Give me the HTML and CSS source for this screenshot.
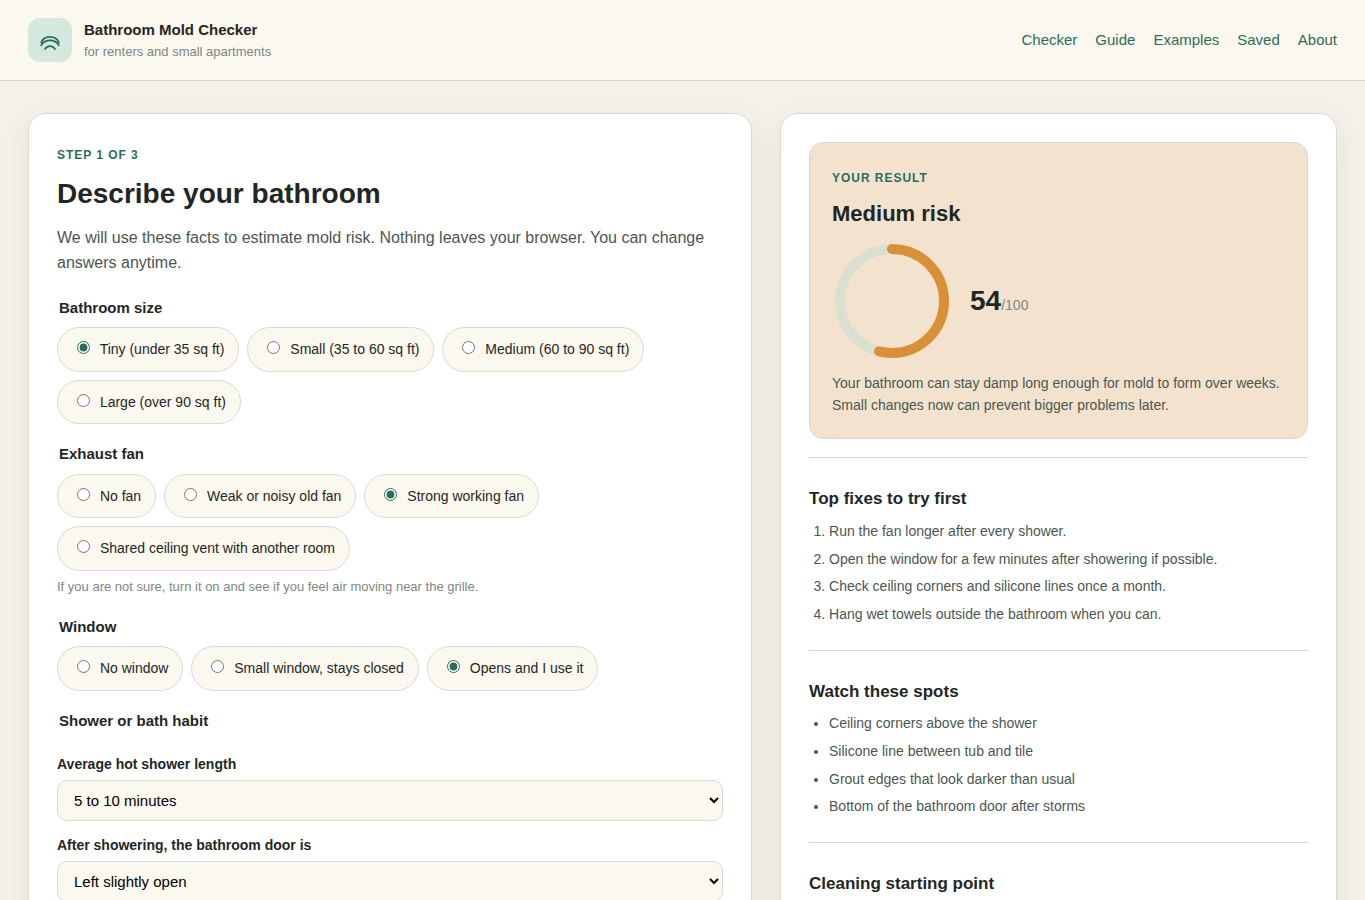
FILE: index.html
```
<!DOCTYPE html>
<html lang="en">
<head>
  <meta charset="utf-8">
  <meta name="viewport" content="width=device-width, initial-scale=1">
  <title>Bathroom Mold Checker</title>
  <link rel="stylesheet" href="styles.css">
</head>
<body>
  <header class="site-header">
    <a class="brand" href="#">
      <span class="brand-mark">
        <svg width="24" height="24" viewBox="0 0 24 24" fill="none" stroke="currentColor" stroke-width="1.7" stroke-linecap="round" aria-hidden="true">
          <path d="M3.2 14.8C6 7 18 7 20.8 14.8"/>
          <path d="M3.2 17.4C7 10.8 17 10.8 20.8 17.4"/>
          <path d="M7 21.2C9 17 15 17 17 21.2"/>
        </svg>
      </span>
      <span class="brand-text">
        <strong>Bathroom Mold Checker</strong>
        <small>for renters and small apartments</small>
      </span>
    </a>
    <nav class="site-nav">
      <a href="#">Checker</a>
      <a href="#">Guide</a>
      <a href="#">Examples</a>
      <a href="#">Saved</a>
      <a href="#">About</a>
    </nav>
  </header>

  <main class="layout">
    <form class="card">
      <p class="eyebrow">Step 1 of 3</p>
      <h1>Describe your bathroom</h1>
      <p class="lead">We will use these facts to estimate mold risk. Nothing leaves your browser. You can change answers anytime.</p>

      <fieldset>
        <legend>Bathroom size</legend>
        <div class="chips">
          <label class="chip"><input type="radio" name="size" checked> Tiny (under 35 sq ft)</label>
          <label class="chip"><input type="radio" name="size"> Small (35 to 60 sq ft)</label>
          <label class="chip"><input type="radio" name="size"> Medium (60 to 90 sq ft)</label>
          <label class="chip"><input type="radio" name="size"> Large (over 90 sq ft)</label>
        </div>
      </fieldset>

      <fieldset>
        <legend>Exhaust fan</legend>
        <div class="chips">
          <label class="chip"><input type="radio" name="fan"> No fan</label>
          <label class="chip"><input type="radio" name="fan"> Weak or noisy old fan</label>
          <label class="chip"><input type="radio" name="fan" checked> Strong working fan</label>
          <label class="chip"><input type="radio" name="fan"> Shared ceiling vent with another room</label>
        </div>
        <p class="hint">If you are not sure, turn it on and see if you feel air moving near the grille.</p>
      </fieldset>

      <fieldset>
        <legend>Window</legend>
        <div class="chips">
          <label class="chip"><input type="radio" name="window"> No window</label>
          <label class="chip"><input type="radio" name="window"> Small window, stays closed</label>
          <label class="chip"><input type="radio" name="window" checked> Opens and I use it</label>
        </div>
      </fieldset>

      <fieldset>
        <legend>Shower or bath habit</legend>
        <div class="field">
          <label for="length">Average hot shower length</label>
          <select id="length"><option>5 to 10 minutes</option></select>
        </div>
        <div class="field">
          <label for="door">After showering, the bathroom door is</label>
          <select id="door"><option>Left slightly open</option></select>
        </div>
      </fieldset>
    </form>

    <aside class="card">
      <section class="result">
        <p class="eyebrow">Your result</p>
        <h2>Medium risk</h2>
        <div class="meter">
          <svg class="ring" width="120" height="120" viewBox="0 0 120 120" aria-hidden="true">
            <circle class="ring-track" cx="60" cy="60" r="52"/>
            <circle class="ring-value" cx="60" cy="60" r="52" pathLength="100" stroke-dasharray="54 100"/>
          </svg>
          <div class="score-line"><span class="score">54</span><span class="score-max">/100</span></div>
        </div>
        <p class="summary">Your bathroom can stay damp long enough for mold to form over weeks. Small changes now can prevent bigger problems later.</p>
      </section>

      <section class="block">
        <h3>Top fixes to try first</h3>
        <ol>
          <li>Run the fan longer after every shower.</li>
          <li>Open the window for a few minutes after showering if possible.</li>
          <li>Check ceiling corners and silicone lines once a month.</li>
          <li>Hang wet towels outside the bathroom when you can.</li>
        </ol>
      </section>

      <section class="block">
        <h3>Watch these spots</h3>
        <ul>
          <li>Ceiling corners above the shower</li>
          <li>Silicone line between tub and tile</li>
          <li>Grout edges that look darker than usual</li>
          <li>Bottom of the bathroom door after storms</li>
        </ul>
      </section>

      <section class="block">
        <h3>Cleaning starting point</h3>
      </section>
    </aside>
  </main>
</body>
</html>
```

FILE: styles.css
```
:root {
  --bg: #f4f1ea;
  --paper: #fbf8f0;
  --line: #d8dad2;
  --ink: #1f2725;
  --soft: #4c5652;
  --muted: #7e8683;
  --green: #2c6e57;
  --mint: #d5e8df;
  --amber: #d99038;
}

* {
  box-sizing: border-box;
}

body {
  margin: 0;
  height: 100vh;
  overflow: hidden;
  background: var(--bg);
  color: var(--ink);
  font: 16px/1.55 "Liberation Sans", Arial, sans-serif;
}

h1, h2, h3, p {
  margin: 0;
}

.site-header {
  display: flex;
  align-items: center;
  justify-content: space-between;
  padding: 18px 28px;
  background: var(--paper);
  border-bottom: 1px solid var(--line);
}

.brand {
  display: flex;
  align-items: center;
  gap: 12px;
  color: inherit;
  text-decoration: none;
}

.brand-mark {
  display: grid;
  place-items: center;
  width: 44px;
  height: 44px;
  border-radius: 12px;
  background: var(--mint);
  color: var(--green);
}

.brand-text strong,
.brand-text small {
  display: block;
}

.brand-text strong {
  font-size: 15px;
  line-height: 22px;
}

.brand-text small {
  font-size: 13px;
  line-height: 21px;
  color: var(--muted);
}

.site-nav {
  display: flex;
  gap: 18px;
}

.site-nav a {
  color: var(--green);
  font-size: 15px;
  text-decoration: none;
}

.layout {
  display: grid;
  grid-template-columns: 1.3fr 1fr;
  gap: 28px;
  padding: 32px 28px;
}

.card {
  min-width: 0;
  min-height: 900px;
  padding: 28px;
  background: #fff;
  border: 1px solid var(--line);
  border-radius: 18px;
  box-shadow: 0 10px 30px rgba(31, 39, 37, .08);
}

.eyebrow {
  font-size: 12px;
  line-height: 26px;
  font-weight: 700;
  letter-spacing: .96px;
  text-transform: uppercase;
  color: var(--green);
}

h1 {
  margin: 8px 0 15px;
  font-size: 28px;
  line-height: 1.25;
}

.lead {
  margin-bottom: 20.2px;
  color: var(--soft);
}

fieldset {
  min-width: 0;
  margin: 0 0 18px;
  padding: 0;
  border: 0;
}

legend {
  margin-bottom: 7.7px;
  padding: 0 2px;
  font-size: 15px;
  line-height: 1.6;
  font-weight: 700;
}

.chips {
  display: flex;
  flex-wrap: wrap;
  gap: 8px;
}

.chip {
  padding: 10px 14px;
  font-size: 14px;
  line-height: 1.6;
  background: var(--paper);
  border: 1px solid var(--line);
  border-radius: 999px;
}

.chip input {
  margin-right: 6px;
  accent-color: var(--green);
}

.hint {
  margin-top: 6px;
  font-size: 13px;
  line-height: 20px;
  color: var(--muted);
}

.field {
  margin-top: 13.5px;
}

.field + .field {
  margin-top: 13.8px;
}

.field label {
  display: block;
  margin-bottom: 4.5px;
  font-size: 14px;
  font-weight: 700;
}

.field select {
  display: block;
  width: 100%;
  height: 41px;
  padding: 0 12px;
  font: 15px "Liberation Sans", Arial, sans-serif;
  color: #000;
  background: var(--paper);
  border: 1px solid var(--line);
  border-radius: 10px;
}

.result {
  margin-bottom: 18px;
  padding: 22px;
  background: #f3e3ce;
  border: 1px solid var(--line);
  border-radius: 14px;
}

.result h2 {
  margin: 9px 0 12.4px;
  font-size: 22px;
  line-height: 1.3;
}

.summary {
  margin-top: 12px;
  font-size: 14px;
  color: var(--soft);
}

.meter {
  display: flex;
  align-items: center;
  gap: 18px;
}

.ring {
  display: block;
  transform: rotate(-90deg);
}

.ring circle {
  fill: none;
  stroke-width: 10;
}

.ring-track {
  stroke: #dbdfcf;
}

.ring-value {
  stroke: var(--amber);
  stroke-linecap: round;
}

.score-line {
  padding-bottom: 1px;
}

.score {
  font-size: 28px;
  font-weight: 700;
}

.score-max {
  font-size: 14px;
  color: var(--muted);
}

.block {
  padding: 28px 0 17.8px;
  border-top: 1px solid var(--line);
}

.block h3 {
  margin-bottom: 8.3px;
  font-size: 17px;
}

.block ol,
.block ul {
  margin: 0;
  padding-left: 20px;
  font-size: 14px;
  color: var(--soft);
}

.block li {
  margin-bottom: 6px;
}
```
